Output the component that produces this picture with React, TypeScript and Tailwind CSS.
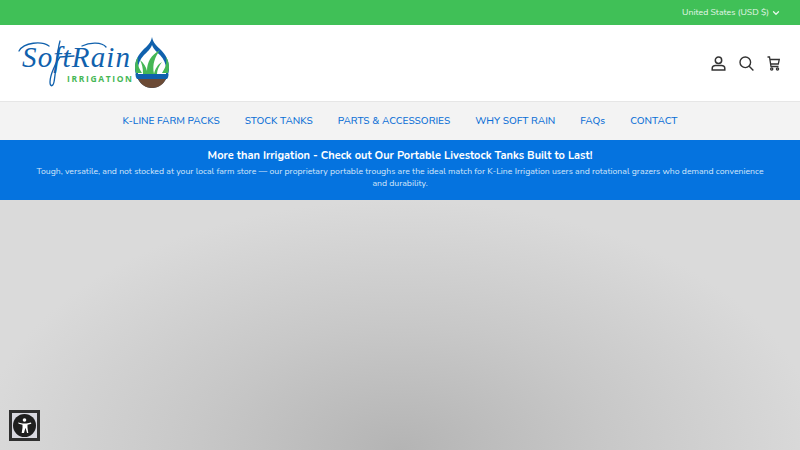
import { ChevronDown } from "lucide-react";

const navItems = ["K-LINE FARM PACKS", "STOCK TANKS", "PARTS & ACCESSORIES", "WHY SOFT RAIN", "FAQs", "CONTACT"];

function Logo() {
  return (
    <svg width="152" height="52" viewBox="0 0 152 52" className="block">
      <text x="4" y="30" fontFamily="'Liberation Serif', serif" fontStyle="italic" fontSize="29" fill="#1061ad" textLength="108" lengthAdjust="spacing">SoftRain</text>
      {/* swashes of the script wordmark */}
      <path d="M1 14C6 5 24 4 31 9M64 9C72 5 84 5 88 10M42 4c-3 10-4 30-6 41-1 5-4 5-4 0 0-7 6-20 10-25l14-1" fill="none" stroke="#1061ad" strokeWidth="1.300" strokeLinecap="round" />
      <text x="49" y="45" fontFamily="'Open Sans', sans-serif" fontWeight="700" fontSize="8.500" fill="#45b755" textLength="65" lengthAdjust="spacing">IRRIGATION</text>
      {/* drop */}
      <path d="M134 0c1 6 5 9 9 13 5 5 8 11 8 18 0 11-8 20-17 20s-17-9-17-20c0-7 3-13 8-18 4-4 8-7 9-13z" fill="#1061ad" />
      <path d="M134 8c2 5 5 7 8 10 4 4 6 9 6 14v5h-28v-5c0-5 2-10 6-14 3-3 6-5 8-10z" fill="#fff" />
      <path d="M117 31c0-5 1-8 3-11-1 6 0 10 4 16h-6zM151 31c0-5-1-8-3-11 1 6 0 10-4 16h6z" fill="#45b755" />
      <path d="M125 37c0-6-1-10-3-14 4 3 6 7 7 11 0-9 4-16 13-21-5 7-8 14-6 24 1-5 4-10 8-12-3 4-5 8-5 12z" fill="#45b755" />
      <path d="M117.500 37h33c0 2-.5 4-1.500 5h-30c-1-1-1.500-3-1.500-5z" fill="#1061ad" />
      <path d="M120 42h28c-3 6-8 9-14 9s-11-3-14-9z" fill="#6b4a35" />
    </svg>
  );
}

function A11yBadge() {
  return (
    <div className="absolute bottom-[9px] left-[9px] flex h-[31px] w-[31px] items-center justify-center border-[3px] border-[#2f2f2f] bg-[#d8d8e0]">
      <svg width="23" height="23" viewBox="0 0 23 23">
        <circle cx="11.500" cy="11.500" r="11.500" fill="#1e1e1e" />
        <circle cx="11.500" cy="6" r="1.800" fill="#fff" />
        <path d="M5 8.500l4.500 1h4l4.500-1 .3 1.200-3.800 1.100v3l.8 5.200h-1.300l-1.300-4.700h-.4l-1.300 4.700H8.700l.8-5.200v-3L5.700 9.700z" fill="#fff" />
      </svg>
    </div>
  );
}

function HeaderIcons() {
  return (
    <div className="flex items-center gap-[13px] text-[#333]">
      <svg width="15" height="15" viewBox="0 0 15 15" fill="none" stroke="currentColor" strokeWidth="1.500">
        <circle cx="7.500" cy="4.200" r="3.200" />
        <path d="M1.200 14v-1.500c0-2 1.500-3 3.500-3h5.600c2 0 3.500 1 3.500 3V14z" />
      </svg>
      <svg width="15" height="15" viewBox="0 0 15 15" fill="none" stroke="currentColor" strokeWidth="1.400">
        <circle cx="6.300" cy="6.300" r="5.300" />
        <path d="M10.200 10.200l4.200 4.200" />
      </svg>
      <svg width="13" height="15" viewBox="0 0 13 15" fill="none" stroke="currentColor" strokeWidth="1.300">
        <path d="M.5 1h2l1.500 9.500h7.500M3 3.500h9.300l-1 4.500H3.700" />
        <circle cx="4.700" cy="13" r="1.100" />
        <circle cx="10.500" cy="13" r="1.100" />
      </svg>
    </div>
  );
}

export default function App() {
  return (
    <div className="relative flex h-[450px] w-[800px] flex-col overflow-hidden bg-white font-['Nunito','Lato',sans-serif]">
      <div className="flex h-[25px] items-center justify-end bg-[#40c057] pr-[19px] text-[8.75px] text-[#e6f7ea]">
        <span>United States (USD $)</span>
        <ChevronDown size={10} strokeWidth={3} className="ml-[2px]" />
      </div>

      <header className="flex h-[76px] items-center justify-between pl-[18px] pr-[20px]">
        <Logo />
        <HeaderIcons />
      </header>

      <nav className="flex h-[39px] items-center justify-center gap-[25px] border-t border-[#e6e6e6] bg-[#f3f3f3] pt-[1px] text-[10.100px] font-medium text-[#0b6fd6]">
        {navItems.map((item) => (
          <span key={item}>{item}</span>
        ))}
      </nav>

      <section className="flex h-[60px] flex-col items-center bg-[#0573df] px-[33px] pt-[9px] text-center text-white">
        <h2 className="text-[11px] font-bold leading-[14px]">More than Irrigation - Check out Our Portable Livestock Tanks Built to Last!</h2>
        <p className="mt-[2px] text-[8.700px] leading-[12px] text-[#d5e7fa]">
          Tough, versatile, and not stocked at your local farm store — our proprietary portable troughs are the ideal match for K-Line Irrigation users and rotational grazers who demand convenience and durability.
        </p>
      </section>

      <div className="flex-1 bg-[radial-gradient(ellipse_420px_250px_at_50%_100%,#b4b4b4_0%,#c8c8c8_50%,#dadada_100%)]" />

      <A11yBadge />
    </div>
  );
}
